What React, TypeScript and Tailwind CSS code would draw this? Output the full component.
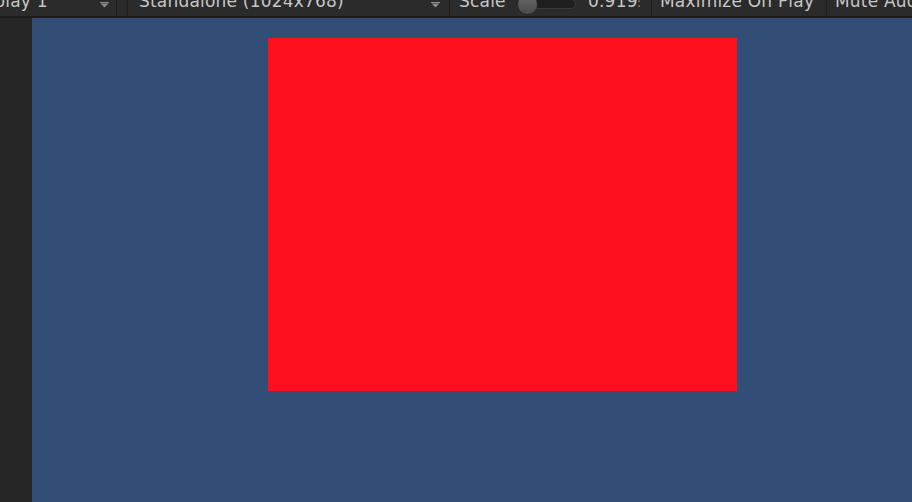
import React from "react";

function Arrow() {
  return (
    <svg width="9" height="6" viewBox="0 0 9 6" className="block shrink-0 mt-[2px]">
      <rect x="0" y="0" width="9" height="1" fill="#8c8c8c" />
      <path d="M0.5 1.5 H8.5 L4.5 5.5 Z" fill="#8c8c8c" />
    </svg>
  );
}

export default function App() {
  return (
    <div
      className="w-[912px] h-[502px] flex flex-col overflow-hidden bg-[#262626]"
      style={{ fontFamily: '"DejaVu Sans", "Lucida Grande", sans-serif' }}
    >
      {/* toolbar */}
      <div className="h-[18px] shrink-0 bg-[#2b2b2b] border-b-2 border-[#1c1c1c] overflow-hidden">
        <div className="flex h-[16px] text-[17px] leading-[16px] tracking-[0.2px] text-[#c6c6c6] whitespace-nowrap">
          {/* Display */}
          <div className="w-[117px] shrink-0 flex items-start justify-between pr-[7px] border-r border-[#1e1e1e]">
            <span className="-ml-[33px] -mt-[7px]">Display 1</span>
            <Arrow />
          </div>
          <div className="w-[11px] shrink-0 border-r border-[#1e1e1e] bg-[#2a2a2a]" />
          {/* Standalone */}
          <div className="w-[322px] shrink-0 flex items-start justify-between pl-[11px] pr-[9px] border-r border-[#1e1e1e]">
            <span className="-mt-[7px]">Standalone (1024x768)</span>
            <Arrow />
          </div>
          {/* Scale */}
          <div className="w-[202px] shrink-0 flex items-start pl-[9px] border-r border-[#1e1e1e]">
            <span className="w-[58px] shrink-0 -mt-[7px]">Scale</span>
            <div className="relative w-[59px] shrink-0 h-[10px] -mt-[1px] rounded-full bg-[#1e1e1e] border border-[#3a3a3a]">
              <div className="absolute -left-[1px] -top-[6px] w-[21px] h-[21px] rounded-full bg-gradient-to-b from-[#6a6a6a] to-[#4a4a4a] border border-[#2a2a2a]" />
            </div>
            <span className="ml-[12px] w-[49px] shrink-0 -mt-[7px] overflow-hidden">0.919</span>
            <span className="-mt-[5px] text-[12px] text-[#9a9a9a]">:</span>
          </div>
          {/* Maximize */}
          <div className="w-[175px] shrink-0 flex items-start pl-[8px] border-r border-[#1e1e1e]">
            <span className="-mt-[7px]">Maximize On Play</span>
          </div>
          {/* Mute */}
          <div className="flex-1 flex items-start pl-[8px]">
            <span className="-mt-[7px]">Mute Audio</span>
          </div>
        </div>
      </div>
      {/* body */}
      <div className="flex-1 flex">
        <div className="w-[32px] shrink-0 bg-[#262626]" />
        <div className="flex-1 bg-[#334e76] pl-[236px] pt-[20px]">
          <div className="w-[469px] h-[353px] bg-[#fe101f]" />
        </div>
      </div>
    </div>
  );
}
